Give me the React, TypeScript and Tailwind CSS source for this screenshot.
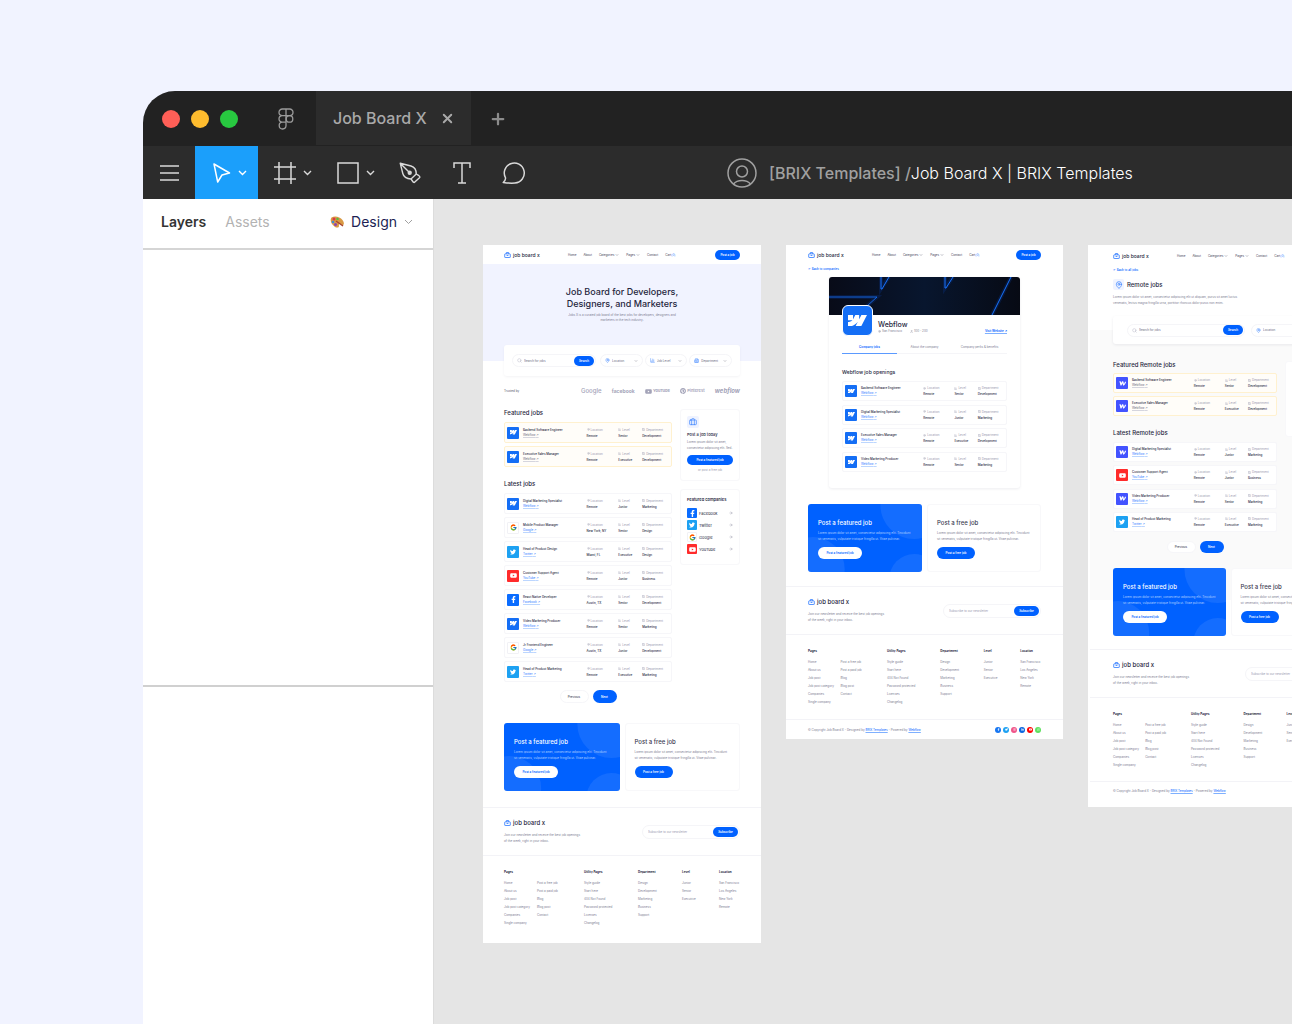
import React from 'react';
import clsx from 'clsx';
import {
  ArrowRight,
  BarChart3,
  Briefcase,
  Building2,
  ChevronDown,
  MapPin,
  Plus,
  Search,
  User,
  X,
} from 'lucide-react';
import { FaFacebookF, FaInstagram, FaLinkedinIn, FaPinterest, FaTwitter, FaWhatsapp, FaYoutube } from 'react-icons/fa';
import { FcGoogle } from 'react-icons/fc';

type Company = 'Webflow' | 'WebflowOld' | 'Google' | 'Twitter' | 'YouTube' | 'Facebook';

interface Job {
  title: string;
  company: Company;
  location: string;
  level: string;
  department: string;
}

const featuredJobs: Job[] = [
  { title: 'Backend Software Engineer', company: 'Webflow', location: 'Remote', level: 'Senior', department: 'Development' },
  { title: 'Executive Sales Manager', company: 'Webflow', location: 'Remote', level: 'Executive', department: 'Development' },
];

const latestJobs: Job[] = [
  { title: 'Digital Marketing Specialist', company: 'Webflow', location: 'Remote', level: 'Junior', department: 'Marketing' },
  { title: 'Mobile Product Manager', company: 'Google', location: 'New York, NY', level: 'Senior', department: 'Design' },
  { title: 'Head of Product Design', company: 'Twitter', location: 'Miami, FL', level: 'Executive', department: 'Design' },
  { title: 'Customer Support Agent', company: 'YouTube', location: 'Remote', level: 'Junior', department: 'Business' },
  { title: 'React Native Developer', company: 'Facebook', location: 'Austin, TX', level: 'Senior', department: 'Development' },
  { title: 'Video Marketing Producer', company: 'Webflow', location: 'Remote', level: 'Senior', department: 'Marketing' },
  { title: 'Jr Frontend Engineer', company: 'Google', location: 'Austin, TX', level: 'Junior', department: 'Development' },
  { title: 'Head of Product Marketing', company: 'Twitter', location: 'Remote', level: 'Executive', department: 'Marketing' },
];

const webflowJobs: Job[] = [featuredJobs[0], latestJobs[0], featuredJobs[1], latestJobs[5]];

const remoteFeatured: Job[] = featuredJobs.map((j) => ({ ...j, company: 'WebflowOld' }));

const remoteLatest: Job[] = [
  { ...latestJobs[0], company: 'WebflowOld' },
  latestJobs[3],
  { ...latestJobs[5], company: 'WebflowOld' },
  latestJobs[7],
];

const footerColumns = [
  { title: 'Pages', links: ['Home', 'About us', 'Job post', 'Job post category', 'Companies', 'Single company'] },
  { title: '', links: ['Post a free job', 'Post a paid job', 'Blog', 'Blog post', 'Contact'] },
  { title: 'Utility Pages', links: ['Style guide', 'Start here', '404 Not Found', 'Password protected', 'Licenses', 'Changelog'] },
  { title: 'Department', links: ['Design', 'Development', 'Marketing', 'Business', 'Support'] },
  { title: 'Level', links: ['Junior', 'Senior', 'Executive'] },
  { title: 'Location', links: ['San Francisco', 'Los Angeles', 'New York', 'Remote'] },
];

const WebflowMark = ({ className }: { className?: string }) => (
  <svg viewBox="0 0 24 15" fill="currentColor" className={className}>
    <path d="M24 0l-7.700 15H9.100l3.200-6.200h-.1C9.600 12.200 5.600 14.400 0 15V8.900s3.600-.2 5.700-2.400H0V0h6.400v5.300h.1L9.200 0h4.900v5.300h.1L16.900 0H24z" />
  </svg>
);

const CompanyIcon = ({ company, className }: { company: Company; className?: string }) => (
  <span
    className={clsx(
      'flex shrink-0 items-center justify-center rounded-[1px] text-white',
      company === 'Webflow' && 'bg-[#146ef5]',
      company === 'WebflowOld' && 'bg-[#4353ff]',
      company === 'Google' && 'border border-[#f1f1f5] bg-white',
      company === 'Twitter' && 'bg-[#1da1f2]',
      company === 'YouTube' && 'bg-[#ff2b2b]',
      company === 'Facebook' && 'bg-[#0a6cff]',
      className,
    )}
  >
    {company === 'Webflow' && <WebflowMark className="w-[7px]" />}
    {company === 'WebflowOld' && (
      <svg viewBox="0 0 14 10" className="w-[7px]" fill="none" stroke="currentColor" strokeWidth="2.400" strokeLinejoin="round">
        <path d="M1 1.500h1.500L4 8l3-6.500h.8L9 8c2-1.500 3.500-4 4-6.500" />
      </svg>
    )}
    {company === 'Google' && <FcGoogle size={7} />}
    {company === 'Twitter' && <FaTwitter size={6} />}
    {company === 'YouTube' && <FaYoutube size={7} />}
    {company === 'Facebook' && <FaFacebookF size={7} />}
  </span>
);

const BrandLogo = ({ large }: { large?: boolean }) => (
  <a
    href="#"
    className={clsx(
      'flex items-center gap-[2px] leading-[8px] font-medium whitespace-nowrap text-[#26263d]',
      large ? 'text-[6px]' : 'text-[5px]',
    )}
  >
    <svg viewBox="0 0 14 13" className="h-[6px] w-[7px]" fill="none" stroke="#2f7bff" strokeWidth="1.800">
      <rect x="1" y="4" width="12" height="8" rx="1" />
      <path d="M4.500 4V1.200h5V4M5 7.500h4" />
    </svg>
    job board x
  </a>
);

const SiteHeader = ({ className }: { className?: string }) => (
  <header className={clsx('flex items-center', className)}>
    <div className="w-[64px]">
      <BrandLogo />
    </div>
    <nav className="flex flex-1 items-center gap-[7px] text-[3px] leading-[4px] text-[#3f3f58]">
      <a href="#">Home</a>
      <a href="#">About</a>
      <a href="#" className="flex items-center gap-px">Categories <ChevronDown size={4} /></a>
      <a href="#" className="flex items-center gap-px">Pages <ChevronDown size={4} /></a>
      <a href="#">Contact</a>
      <a href="#">Cart<span className="text-[#2f7bff]">(0)</span></a>
    </nav>
    <button className="h-[10px] w-[25px] rounded-full bg-[#0061ff] text-[3px] leading-[4px] font-semibold text-white">
      Post a job
    </button>
  </header>
);

const SearchBox = ({ id, className }: { id: string; className?: string }) => (
  <div className={clsx('flex h-[13px] items-center gap-[2px] rounded-full border border-[#f5f5f8] bg-white pr-px pl-[4px]', className)}>
    <Search size={5} className="shrink-0 text-[#9a9ab0]" strokeWidth={1.500} />
    <input
      id={id}
      aria-label="Search for jobs"
      placeholder="Search for jobs"
      className="min-w-0 flex-1 text-[3px] leading-[4px] placeholder:text-[#6a6a80]"
    />
    <button className="h-[10px] w-[20px] rounded-full bg-[#0061ff] text-[3px] leading-[4px] font-semibold text-white">Search</button>
  </div>
);

const FilterSelect = ({ label, icon: Icon, className }: { label: string; icon: typeof MapPin; className?: string }) => (
  <div className={clsx('flex h-[13px] items-center gap-[2px] rounded-full border border-[#f5f5f8] bg-white px-[4px]', className)}>
    <Icon size={5} className="shrink-0 text-[#2f7bff]" />
    <select aria-label={label} className="min-w-0 flex-1 appearance-none text-[3px] leading-[4px] text-[#6a6a80]">
      <option>{label}</option>
    </select>
    <ChevronDown size={4} className="shrink-0 text-[#55556b]" />
  </div>
);

const JobMeta = ({ icon: Icon, label, value }: { icon: typeof MapPin; label: string; value: string }) => (
  <div>
    <div className="flex items-center gap-px text-[3px] leading-[6px] text-[#9a9ab0]">
      <Icon size={3} />
      {label}
    </div>
    <div className="text-[3px] leading-[6px] font-medium whitespace-nowrap text-[#26263d]">{value}</div>
  </div>
);

const JobRow = ({ job, featured, className }: { job: Job; featured?: boolean; className?: string }) => (
  <li
    className={clsx(
      'grid grid-cols-[16px_64fr_32fr_24fr_29fr] items-center rounded-[2px] border pl-[2px]',
      featured ? 'border-[#fff1cf] bg-[#fffdf9]' : 'border-[#f6f6f9] bg-white',
      className,
    )}
  >
    <CompanyIcon company={job.company} className="size-[12px]" />
    <div className="whitespace-nowrap">
      <div className="text-[3px] leading-[5px] font-medium text-[#26263d]">{job.title}</div>
      <a
        href="#"
        className={clsx(
          'block text-[3px] leading-[5px] underline',
          featured ? 'text-[#6a6a80] decoration-[#d5d5de]' : 'text-[#2f7bff] decoration-[#bcd6ff]',
        )}
      >
        {job.company === 'WebflowOld' ? 'Webflow' : job.company} ↗
      </a>
    </div>
    <JobMeta icon={MapPin} label="Location" value={job.location} />
    <JobMeta icon={BarChart3} label="Level" value={job.level} />
    <JobMeta icon={Briefcase} label="Department" value={job.department} />
  </li>
);

const Pagination = ({ className }: { className?: string }) => (
  <div className={clsx('flex items-center justify-center gap-[4px] text-[3px] leading-[4px]', className)}>
    <button className="h-full w-[29px] rounded-full border border-[#f6f6f9] bg-white text-[#26263d]">Previous</button>
    <button className="h-full w-[24px] rounded-full bg-[#0061ff] font-semibold text-white">Next</button>
  </div>
);

const CtaCards = ({ className }: { className?: string }) => (
  <section className={clsx('grid grid-cols-2 gap-[5px]', className)}>
    <div className="relative overflow-hidden rounded-[3px] bg-[#0061ff] px-[10px] pt-[15px] pb-[13px] text-white">
      <svg className="absolute inset-0 size-full" viewBox="0 0 115 68" preserveAspectRatio="none" fill="#fff" fillOpacity="0.080">
        <circle cx="107" cy="1" r="34" />
        <circle cx="5" cy="65" r="32" />
        <circle cx="107" cy="75" r="25" />
      </svg>
      <div className="relative">
        <h3 className="text-[6px] leading-[8px] font-medium">Post a featured job</h3>
        <p className="mt-[3px] text-[3px] leading-[6px] whitespace-nowrap text-[#b5d1ff]">
          Lorem ipsum dolor sit amet, consectetur adipiscing elit. Tincidunt
          <br />
          sit venenatis, vulputate tristique fringilla ut. Vitae pulvinar.
        </p>
        <button className="mt-[5px] block h-[12px] w-[44px] rounded-full bg-white text-[3px] leading-[4px] font-semibold text-[#0061ff]">
          Post a featured job
        </button>
      </div>
    </div>
    <div className="rounded-[3px] border border-[#f8f8fa] bg-white px-[9px] pt-[14px]">
      <h3 className="text-[6px] leading-[8px] font-medium text-[#3a3a50]">Post a free job</h3>
      <p className="mt-[3px] text-[3px] leading-[6px] whitespace-nowrap text-[#7d7d92]">
        Lorem ipsum dolor sit amet, consectetur adipiscing elit. Tincidunt
        <br />
        sit venenatis, vulputate tristique fringilla ut. Vitae pulvinar.
      </p>
      <button className="mt-[5px] block h-[12px] w-[38px] rounded-full bg-[#0061ff] text-[3px] leading-[4px] font-semibold text-white">
        Post a free job
      </button>
    </div>
  </section>
);

const SiteFooter = ({ className, pad }: { className?: string; pad: string }) => (
  <footer className={className}>
    <div className={clsx('flex items-center justify-between border-t border-[#f3f3f7] pt-[11px] pb-[11px]', pad)}>
      <div>
        <BrandLogo large />
        <p className="mt-[5px] text-[3px] leading-[6px] whitespace-nowrap text-[#7d7d92]">
          Join our newsletter and receive the best job openings
          <br />
          of the week, right in your inbox.
        </p>
      </div>
      <div className="flex h-[14px] w-[98px] shrink-0 items-center rounded-full border border-[#f5f5f8] pr-px pl-[5px]">
        <input
          aria-label="Subscribe to our newsletter"
          placeholder="Subscribe to our newsletter"
          className="min-w-0 flex-1 text-[3px] leading-[4px] placeholder:text-[#9a9ab0]"
        />
        <button className="h-[10px] w-[25px] rounded-full bg-[#0061ff] text-[3px] leading-[4px] font-semibold text-white">Subscribe</button>
      </div>
    </div>
    <div className={clsx('grid grid-cols-[33fr_47fr_54fr_44fr_37fr_21fr] border-t border-[#f3f3f7] pt-[14px] whitespace-nowrap', pad)}>
      {footerColumns.map((column) => (
        <div key={column.links[0]} className="min-w-0">
          <h4 className="h-[4px] text-[3px] leading-[4px] font-bold text-[#26263d]">{column.title}</h4>
          <ul className="mt-[5px] text-[3px] leading-[8px] text-[#7d7d92]">
            {column.links.map((link) => (
              <li key={link} className="h-[8px]">
                <a href="#">{link}</a>
              </li>
            ))}
          </ul>
        </div>
      ))}
    </div>
  </footer>
);

const Copyright = ({ className, children }: { className?: string; children?: React.ReactNode }) => (
  <div className={clsx('flex items-center justify-between border-t border-[#f3f3f7] text-[3px] leading-[4px] text-[#7d7d92]', className)}>
    <p>
      © Copyright Job Board X - Designed by{' '}
      <a href="#" className="text-[#0061ff] underline decoration-[#7fb0ff]">BRIX Templates</a> - Powered by{' '}
      <a href="#" className="text-[#0061ff] underline decoration-[#7fb0ff]">Webflow</a>
    </p>
    {children}
  </div>
);

const FeaturedCompanies = ({ className }: { className?: string }) => (
  <section className={clsx('rounded-[3px] border border-[#f8f8fa] bg-white px-[6px] pt-[7px] pb-[10px]', className)}>
    <h3 className="text-[4px] leading-[5px] font-semibold whitespace-nowrap text-[#26263d]">Featured companies</h3>
    <ul className="mt-[6px] space-y-[2px]">
      {(['Facebook', 'Twitter', 'Google', 'YouTube'] as Company[]).map((company) => (
        <li key={company} className="flex items-center gap-[2px] text-[4px] leading-[5px] text-[#26263d]">
          <CompanyIcon company={company} className="size-[10px]" />
          <a href="#" className="flex-1">{company}</a>
          <ArrowRight size={4} className="text-[#7d7d92]" />
        </li>
      ))}
    </ul>
  </section>
);

const HomeFrame = () => (
  <article className="absolute top-[46px] left-[49px] w-[278px] bg-white">
    <SiteHeader className="h-[19px] px-[21px]" />
    <section className="h-[97px] bg-[#f1f3ff] pt-[22px] text-center">
      <h1 className="text-[9px] leading-[12px] font-medium text-[#26263d]">
        Job Board for Developers,
        <br />
        Designers, and Marketers
      </h1>
      <p className="mt-[3px] text-[3px] leading-[5px] text-[#7d7d92]">
        Jobs X is a curated job board of the best jobs for developers, designers and
        <br />
        marketers in the tech industry.
      </p>
    </section>
    <div className="px-[21px]">
      <div className="relative -mt-[16px] flex h-[31px] items-center gap-[2px] rounded-[3px] bg-white px-[8px] shadow-[0_1px_3px_rgba(20,20,60,0.05)]">
        <SearchBox id="home-search" className="mr-[2px] flex-[82]" />
        <FilterSelect label="Location" icon={MapPin} className="flex-[44]" />
        <FilterSelect label="Job Level" icon={BarChart3} className="flex-[44]" />
        <FilterSelect label="Department" icon={Building2} className="flex-[44]" />
      </div>
      <div className="mt-[11px] flex h-[8px] items-center text-[#a3a3b8]">
        <span className="w-[77px] text-[3px] leading-[4px] text-[#55556b]">Trusted by</span>
        <div className="flex flex-1 items-center justify-between">
          <span className="text-[6px] leading-[8px] font-medium">Google</span>
          <span className="text-[5px] leading-[8px] font-bold">facebook</span>
          <span className="flex items-center gap-px text-[4px] leading-[8px] font-bold"><FaYoutube size={7} />YouTube</span>
          <span className="flex items-center gap-px text-[4px] leading-[8px] font-semibold"><FaPinterest size={6} />Pinterest</span>
          <span className="text-[6px] leading-[8px] font-bold italic">webflow</span>
        </div>
      </div>
      <div className="mt-[14px] flex items-start gap-[8px]">
        <div className="min-w-0 flex-1">
          <h2 className="text-[6px] leading-[8px] font-medium text-[#26263d]">Featured jobs</h2>
          <ul className="mt-[5px] space-y-[3px]">
            {featuredJobs.map((job) => (
              <JobRow key={job.title} job={job} featured className="h-[21px]" />
            ))}
          </ul>
          <h2 className="mt-[13px] text-[6px] leading-[8px] font-medium text-[#26263d]">Latest jobs</h2>
          <ul className="mt-[5px] space-y-[3px]">
            {latestJobs.map((job) => (
              <JobRow key={job.title} job={job} className="h-[21px]" />
            ))}
          </ul>
          <Pagination className="mt-[8px] h-[13px]" />
        </div>
        <aside className="w-[60px]">
          <section className="rounded-[3px] border border-[#f8f8fa] bg-white px-[6px] pt-[6px] pb-[8px]">
            <div className="flex size-[12px] items-center justify-center rounded-[2px] bg-[#eff3ff]">
              <Briefcase size={8} className="text-[#2f7bff]" />
            </div>
            <h3 className="mt-[4px] text-[4px] leading-[5px] font-medium whitespace-nowrap text-[#26263d]">Post a job today</h3>
            <p className="mt-[2px] text-[3px] leading-[6px] whitespace-nowrap text-[#7d7d92]">
              Lorem ipsum dolor sit amet,
              <br />
              consectetur adipiscing elit. Sed.
            </p>
            <button className="mt-[4px] block h-[10px] w-full rounded-full bg-[#0061ff] text-[3px] leading-[4px] font-semibold text-white">
              Post a featured job
            </button>
            <a href="#" className="mt-[3px] block text-center text-[3px] leading-[4px] text-[#9a9ab0]">or post a free job</a>
          </section>
          <FeaturedCompanies className="mt-[8px]" />
        </aside>
      </div>
      <CtaCards className="mt-[20px]" />
    </div>
    <SiteFooter className="mt-[16px] pb-[16px]" pad="px-[21px]" />
  </article>
);

const CoverArt = () => (
  <svg viewBox="0 0 191 38" preserveAspectRatio="xMidYMid slice" className="block h-[38px] w-full rounded-t-[3px]" fill="none">
    <defs>
      <linearGradient id="cover" x1="0" x2="1">
        <stop offset="0" stopColor="#080b18" />
        <stop offset="0.500" stopColor="#08162e" />
        <stop offset="1" stopColor="#070a14" />
      </linearGradient>
    </defs>
    <rect width="191" height="38" fill="url(#cover)" />
    <g stroke="#0b4fd0" strokeOpacity="0.180" strokeWidth="4">
      <path d="M52 0v12l8-12M116 0v11l8-11M182 0l-19 38M0 20h48L38 29" />
    </g>
    <g stroke="#1673ff" strokeWidth="1">
      <path d="M52 0v12h1l7-12M116 0v11h1l7-11M182 0l-19 38" />
      <path d="M0 20h48L38 29" strokeOpacity="0.800" />
    </g>
  </svg>
);

const socials = [
  { icon: FaFacebookF, color: 'bg-[#1877f2]' },
  { icon: FaTwitter, color: 'bg-[#1da1f2]' },
  { icon: FaInstagram, color: 'bg-[#f0558a]' },
  { icon: FaLinkedinIn, color: 'bg-[#0a66e0]' },
  { icon: FaYoutube, color: 'bg-[#ff0000]' },
  { icon: FaWhatsapp, color: 'bg-[#5fe05f]' },
];

const CompanyFrame = () => (
  <article className="absolute top-[46px] left-[352px] w-[277px] bg-white">
    <div className="px-[22px]">
      <SiteHeader className="h-[19px]" />
      <a href="#" className="mt-[3px] block text-[3px] leading-[4px] font-medium text-[#0061ff]">← Back to companies</a>
      <section className="mx-auto mt-[6px] w-[191px] rounded-[3px] shadow-[0_1px_3px_rgba(20,20,60,0.080)]">
        <CoverArt />
        <div className="px-[13px] pb-[16px]">
          <div className="relative -mt-[10px] flex items-end gap-[5px]">
            <div className="flex size-[31px] items-center justify-center rounded-[6px] border border-white bg-[#146ef5] text-white">
              <WebflowMark className="w-[19px]" />
            </div>
            <div className="flex flex-1 items-end justify-between pb-[3px]">
              <div>
                <h1 className="text-[7px] leading-[7px] font-medium text-[#26263d]">Webflow</h1>
                <div className="mt-px flex gap-[8px] text-[3px] leading-[4px] text-[#7d7d92]">
                  <span className="flex items-center gap-px"><MapPin size={3} />San Francisco</span>
                  <span className="flex items-center gap-px"><User size={3} />100 - 200</span>
                </div>
              </div>
              <a href="#" className="text-[3px] leading-[4px] font-semibold text-[#0061ff] underline decoration-[#7fb0ff]">Visit Website ↗</a>
            </div>
          </div>
          <div className="mt-[9px] grid grid-cols-3 text-center text-[3px] leading-[5px] text-[#7d7d92]">
            <button className="border-b border-[#5b9aff] pb-[3px] font-semibold text-[#0061ff]">Company jobs</button>
            <button className="border-b border-[#f5f5f8] pb-[3px]">About the company</button>
            <button className="border-b border-[#f5f5f8] pb-[3px]">Company perks &amp; benefits</button>
          </div>
          <h2 className="mt-[15px] text-[5px] leading-[6px] font-medium text-[#26263d]">Webflow job openings</h2>
          <ul className="mt-[6px] flex h-[91px] flex-col justify-between">
            {webflowJobs.map((job) => (
              <JobRow key={job.title} job={job} className="h-[20px]" />
            ))}
          </ul>
        </div>
      </section>
      <CtaCards className="mt-[16px]" />
    </div>
    <SiteFooter className="mt-[14px] pb-[13px]" pad="px-[22px]" />
    <Copyright className="h-[20px] px-[22px]">
      <div className="flex gap-[2px]">
        {socials.map(({ icon: Icon, color }) => (
          <span key={color} className={clsx('flex size-[6px] items-center justify-center rounded-full text-white', color)}>
            <Icon size={3} />
          </span>
        ))}
      </div>
    </Copyright>
  </article>
);

const RemoteFrame = () => (
  <article className="absolute top-[46px] left-[654px] w-[278px] bg-white pb-[7px] pl-[2px]">
    <div className="bg-[linear-gradient(#fff_85px,#fafafa_85px,#fafafa_355px,#fff_355px)]">
      <div className="px-[23px]">
        <SiteHeader className="h-[21px]" />
        <a href="#" className="mt-[2px] block text-[3px] leading-[4px] font-medium text-[#0061ff]">← Back to all jobs</a>
        <div className="mt-[7px] flex h-[11px] items-center gap-[3px]">
          <span className="flex size-[11px] items-center justify-center rounded-[2px] bg-[#eff3ff]">
            <MapPin size={8} className="text-[#2f7bff]" />
          </span>
          <h1 className="text-[6px] leading-[8px] font-medium text-[#26263d]">Remote jobs</h1>
        </div>
        <p className="mt-[4px] text-[3px] leading-[6px] whitespace-nowrap text-[#7d7d92]">
          Lorem ipsum dolor sit amet, consectetur adipiscing elit ut aliquam, purus sit amet luctus
          <br />
          venenatis, lectus magna fringilla urna, porttitor rhoncus dolor purus non enim.
        </p>
        <div className="mt-[10px] flex h-[28px] items-center gap-[6px] rounded-[3px] bg-white px-[14px] shadow-[0_1px_3px_rgba(20,20,60,0.080)]">
          <SearchBox id="remote-search" className="w-[118px]" />
          <FilterSelect label="Location" icon={MapPin} className="flex-1" />
        </div>
        <div className="mt-[17px] flex items-start gap-[8px]">
          <div className="w-[164px] shrink-0">
            <h2 className="text-[6px] leading-[8px] font-medium text-[#26263d]">Featured Remote jobs</h2>
            <ul className="mt-[4px] flex h-[43px] flex-col justify-between">
              {remoteFeatured.map((job) => (
                <JobRow key={job.title} job={job} featured className="h-[20px]" />
              ))}
            </ul>
            <h2 className="mt-[13px] text-[6px] leading-[8px] font-medium text-[#26263d]">Latest Remote jobs</h2>
            <ul className="mt-[5px] flex h-[90px] flex-col justify-between">
              {remoteLatest.map((job) => (
                <JobRow key={job.title} job={job} className="h-[20px]" />
              ))}
            </ul>
            <Pagination className="mt-[9px] h-[12px]" />
          </div>
          <FeaturedCompanies className="flex-1" />
        </div>
        <CtaCards className="mt-[15px]" />
      </div>
    </div>
    <SiteFooter className="mt-[13px] pb-[12px]" pad="px-[23px]" />
    <Copyright className="h-[19px] px-[23px]" />
  </article>
);

const ToolChevron = () => (
  <svg width="9" height="6" viewBox="0 0 9 6" fill="none" stroke="currentColor" strokeWidth="1.400">
    <path d="M1 1l3.500 3.500L8 1" />
  </svg>
);

const TitleBar = () => (
  <div className="flex h-[55px] items-center bg-[#222222] pl-[19px]">
    <div className="flex gap-[11px]">
      <span className="size-[18px] rounded-full bg-[#ff5f57]" />
      <span className="size-[18px] rounded-full bg-[#febc2e]" />
      <span className="size-[18px] rounded-full bg-[#28c840]" />
    </div>
    <button aria-label="Home" className="ml-[40px]">
      <svg width="16" height="22" viewBox="0 0 16 22" fill="none" stroke="#9b9b9b" strokeWidth="1.300">
        <path d="M8 1H4.300a3.300 3.300 0 0 0 0 6.600H8zM8 1h3.700a3.300 3.300 0 0 1 0 6.600H8zM8 7.600H4.300a3.300 3.300 0 0 0 0 6.600H8zM8 14.200H4.300A3.400 3.400 0 1 0 8 17.600z" />
        <circle cx="11.500" cy="10.900" r="3.300" />
      </svg>
    </button>
    <div className="ml-[22px] flex h-full w-[155px] items-center justify-between border-b border-[#222222] bg-[#2c2c2c] pr-[16px] pl-[17px] text-[#a9a9a9]">
      <span className="text-base font-medium">Job Board X</span>
      <button aria-label="Close tab"><X size={15} strokeWidth={3} /></button>
    </div>
    <button aria-label="New tab" className="ml-[18px] text-[#8c8c8c]"><Plus size={18} strokeWidth={3} /></button>
  </div>
);

const Toolbar = () => (
  <div className="flex h-[53px] bg-[#2c2c2c] text-[#d9d9d9]">
    <button aria-label="Menu" className="flex w-[52px] items-center justify-center">
      <svg width="19" height="16" viewBox="0 0 19 16" stroke="currentColor" strokeWidth="1.500">
        <path d="M0 1h19M0 8h19M0 15h19" />
      </svg>
    </button>
    <button aria-label="Move" className="flex w-[63px] items-center justify-center gap-[7px] bg-[#1b9ffb] pl-[6px] text-white">
      <svg width="18" height="22" viewBox="0 0 18 22" fill="none" stroke="currentColor" strokeWidth="1.500" strokeLinejoin="round">
        <path d="M1 2l15.500 9-7.500 2-4.300 7z" />
      </svg>
      <ToolChevron />
    </button>
    <button aria-label="Frame" className="flex w-[63px] items-center justify-center gap-[7px] pl-[7px]">
      <svg width="22" height="22" viewBox="0 0 22 22" fill="none" stroke="currentColor" strokeWidth="1.500">
        <path d="M5 0v22M17 0v22M0 5h22M0 17h22" />
      </svg>
      <ToolChevron />
    </button>
    <button aria-label="Rectangle" className="flex w-[63px] items-center justify-center gap-[7px] pl-[7px]">
      <svg width="22" height="22" viewBox="0 0 22 22" fill="none" stroke="currentColor" strokeWidth="1.500">
        <rect x="1" y="1" width="20" height="20" />
      </svg>
      <ToolChevron />
    </button>
    <button aria-label="Pen" className="flex w-[52px] items-center justify-center">
      <svg width="22" height="22" viewBox="0 0 22 22" fill="none" stroke="currentColor" strokeWidth="1.400" strokeLinejoin="round">
        <path d="M1.200 1.200l2.600 10.300c.8 3.200 4 5.300 8.200 5.500l1.800 2.500c.6.800 1.300 1.300 2 .6l4.700-4.400c.7-.7.2-1.400-.6-2l-2.600-1.700c0-4-2-7-5.300-8zM1.200 1.200l8.500 8.600" />
        <path d="M12 17l5.300-5" />
        <circle cx="10.700" cy="10.700" r="1.500" fill="currentColor" />
      </svg>
    </button>
    <button aria-label="Text" className="flex w-[52px] items-center justify-center">
      <svg width="18" height="22" viewBox="0 0 18 22" fill="none" stroke="currentColor" strokeWidth="1.500">
        <path d="M1 6V1h16v5M9 1v20M5 21h8" />
      </svg>
    </button>
    <button aria-label="Comment" className="flex w-[52px] items-center justify-center">
      <svg width="24" height="22" viewBox="0 0 24 22" fill="none" stroke="currentColor" strokeWidth="1.500" strokeLinejoin="round">
        <path d="M1.200 20.500c1.800-1.300 2.300-3 2.400-4.500A10 10 0 1 1 13 21c-3.500.3-8 0-11.800-.5z" />
      </svg>
    </button>
    <div className="ml-[187px] flex items-center gap-[12px] whitespace-nowrap">
      <svg width="30" height="30" viewBox="0 0 30 30" fill="none" stroke="#a0a0a0" strokeWidth="1.500">
        <circle cx="15" cy="15" r="14" />
        <circle cx="15" cy="13.500" r="5.500" />
        <path d="M6.500 26c2-2.500 5-3.500 8.500-3.500s6.500 1 8.500 3.500" />
      </svg>
      <div className="text-base text-white">
        <span className="font-medium text-[#a0a0a0]">[BRIX Templates] /</span>
        <span className="font-light">Job Board X | BRIX Templates</span>
      </div>
    </div>
  </div>
);

const Sidebar = () => (
  <aside className="w-[291px] shrink-0 border-r border-[#dcdcdc] bg-white">
    <div className="flex h-[51px] items-center border-b-2 border-[#d5d5d5] pb-[4px] pl-[18px] text-sm">
      <button className="font-semibold text-[#333333]">Layers</button>
      <button className="ml-[19px] text-[#b3b3b3]">Assets</button>
      <button className="ml-auto flex items-center gap-[7px] pr-[20px] text-[#211f54]">
        <svg width="14" height="12" viewBox="0 0 28 24">
          <path d="M3 3C9-1 20 1 25 8c3 4 4 9 1 10-3 1-4-3-7-2-3 1 1 5-3 7C9 25-3 11 3 3z" fill="#d99a45" />
          <circle cx="8" cy="6" r="3" fill="#d9394a" />
          <circle cx="15" cy="6" r="2.500" fill="#58b947" />
          <circle cx="6" cy="12" r="2.500" fill="#3e8ed0" />
          <circle cx="11" cy="17" r="3" fill="#8e44ad" />
          <path d="M12 10l14 10" stroke="#a8442f" strokeWidth="3" />
        </svg>
        Design
        <svg width="9" height="6" viewBox="0 0 9 6" fill="none" stroke="#a0a0a0">
          <path d="M1 1l3.500 3.500L8 1" />
        </svg>
      </button>
    </div>
    <div className="h-[437px] border-b-2 border-[#d0d0d0]" />
  </aside>
);

export default function App() {
  return (
    <div className="flex h-screen flex-col overflow-hidden bg-[#f1f3ff] pt-[91px] pl-[143px] font-[Inter,sans-serif]">
      <div className="flex min-h-0 flex-1 flex-col overflow-hidden rounded-tl-[32px]">
        <TitleBar />
        <Toolbar />
        <div className="flex min-h-0 flex-1">
          <Sidebar />
          <main className="relative min-w-0 flex-1 overflow-hidden bg-[#e5e5e5]">
            <HomeFrame />
            <CompanyFrame />
            <RemoteFrame />
          </main>
        </div>
      </div>
    </div>
  );
}
